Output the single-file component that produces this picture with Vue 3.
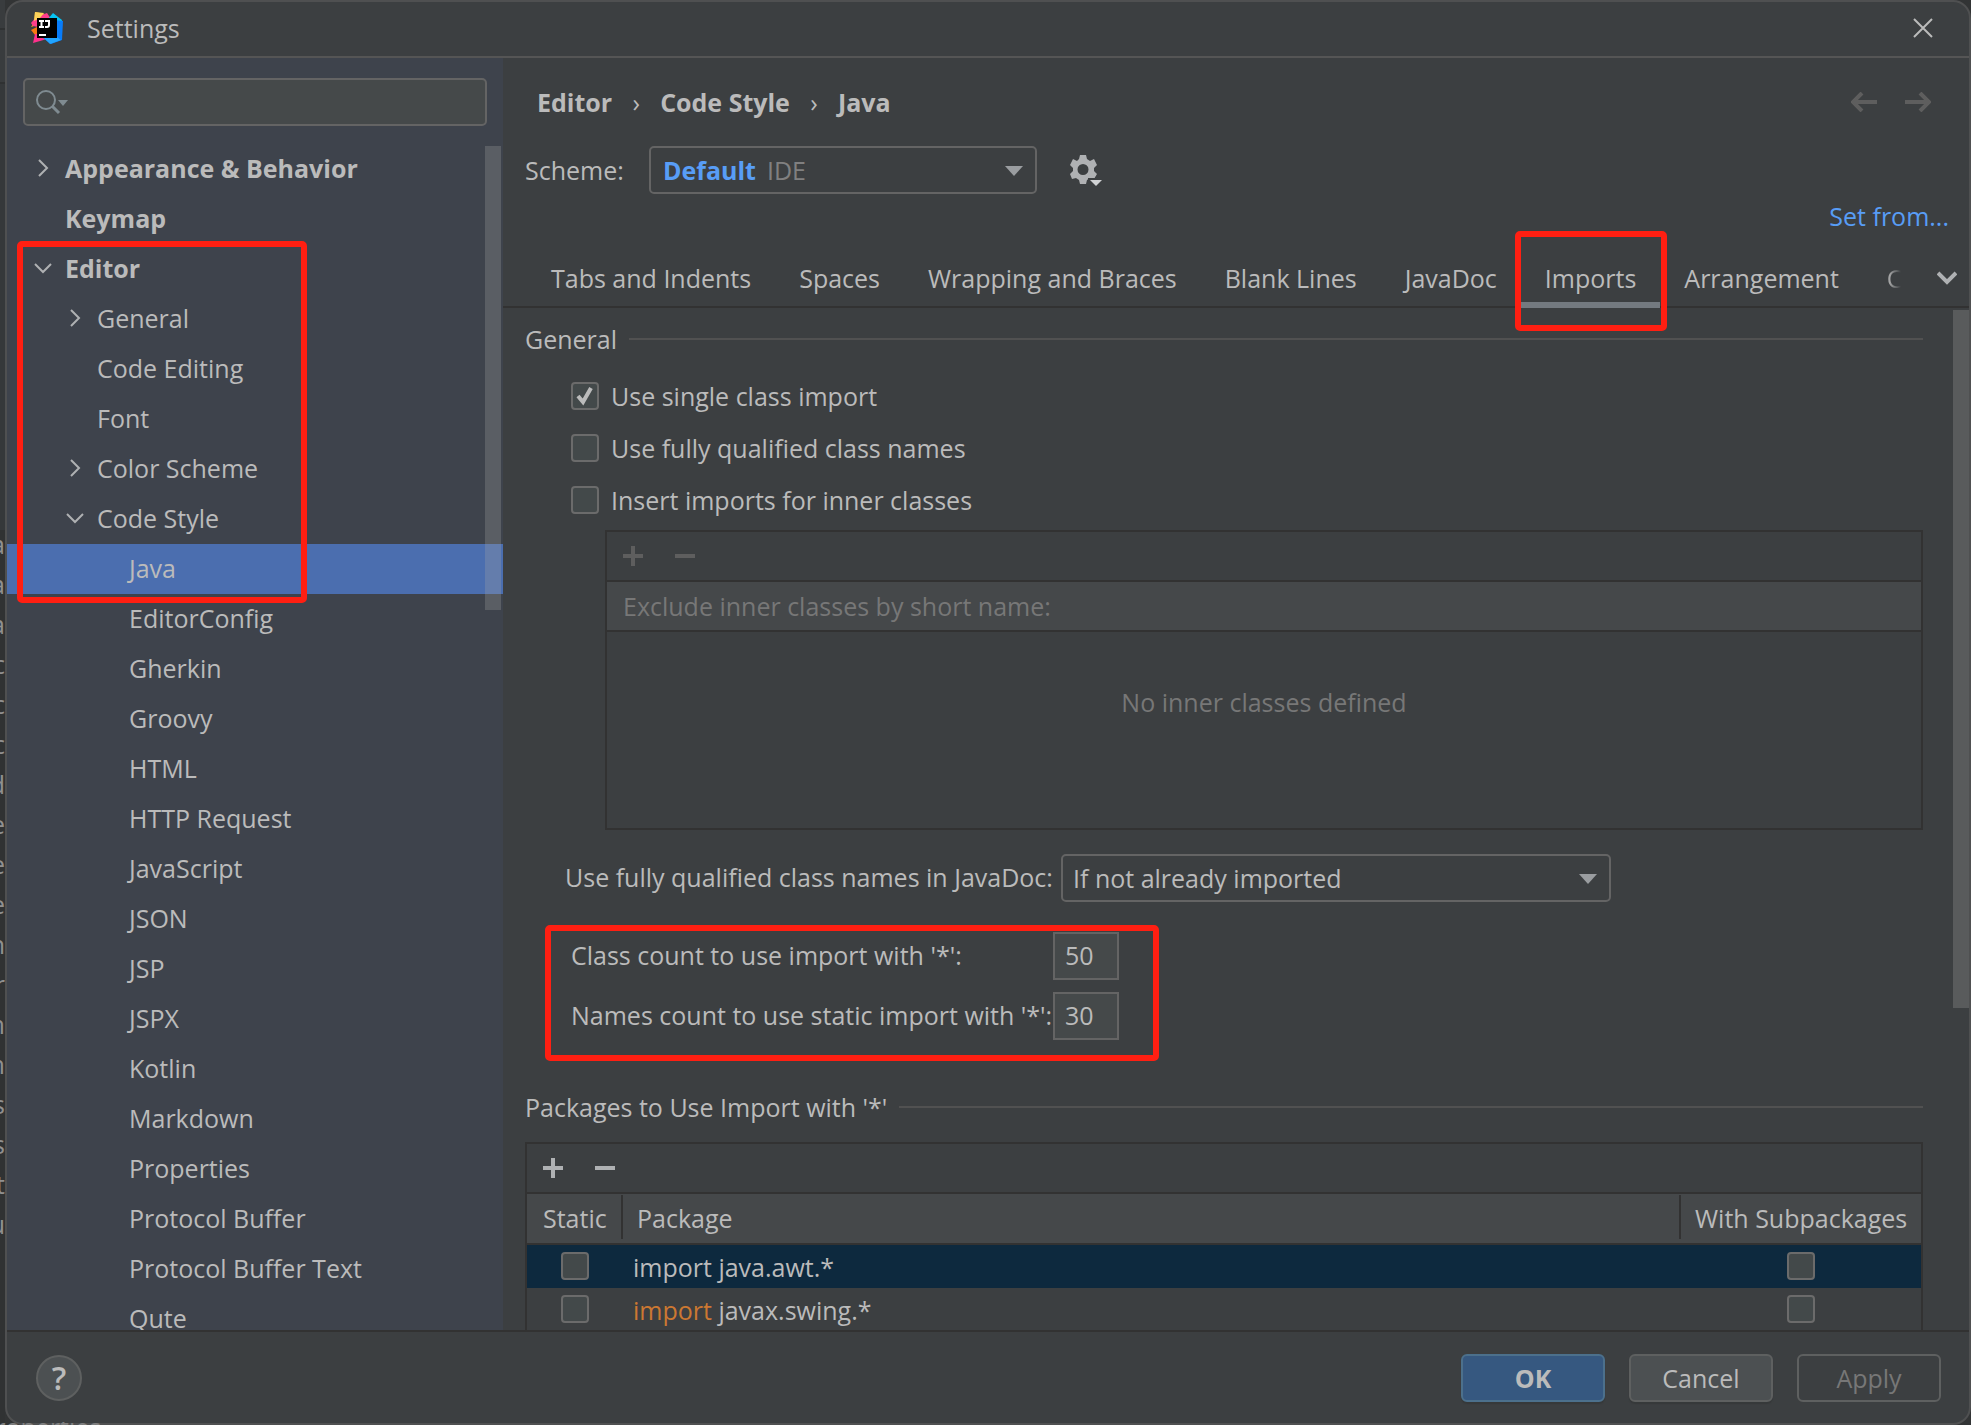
<script setup>
import { ref } from 'vue'

const query = ref('')
const topNodes = [
  { label: 'Appearance & Behavior', level: 0, state: 'closed' },
  { label: 'Keymap', level: 0 },
]
const editorNodes = [
  { label: 'Editor', level: 0, state: 'open' },
  { label: 'General', level: 1, state: 'closed' },
  { label: 'Code Editing', level: 1 },
  { label: 'Font', level: 1 },
  { label: 'Color Scheme', level: 1, state: 'closed' },
  { label: 'Code Style', level: 1, state: 'open' },
  { label: 'Java', level: 2, selected: true },
]
const languageNodes = [
  'EditorConfig', 'Gherkin', 'Groovy', 'HTML', 'HTTP Request', 'JavaScript', 'JSON', 'JSP', 'JSPX',
  'Kotlin', 'Markdown', 'Properties', 'Protocol Buffer', 'Protocol Buffer Text', 'Qute',
].map((label) => ({ label, level: 2 }))
const groups = [
  { nodes: topNodes },
  { nodes: editorNodes, marked: true },
  { nodes: languageNodes },
]

const tabs = ['Tabs and Indents', 'Spaces', 'Wrapping and Braces', 'Blank Lines', 'JavaDoc', 'Imports', 'Arrangement']
const activeTab = ref('Imports')

const options = ref([
  { label: 'Use single class import', checked: true },
  { label: 'Use fully qualified class names', checked: false },
  { label: 'Insert imports for inner classes', checked: false },
])
const classCount = ref('50')
const namesCount = ref('30')
const packages = ref([
  { name: 'java.awt.*', isStatic: false, sub: false, selected: true },
  { name: 'javax.swing.*', isStatic: false, sub: false, selected: false },
])
const behind = ['a', 'a', 'a', 'c', 'c', 'c', 'd', 'e', 'e', 'e', 'n', 'r', 'm', 'm', 's', 's', 't', 'u']
</script>

<template>
  <div class="desktop">
    <div class="behind" aria-hidden="true">
      <span v-for="(letter, i) in behind" :key="i">{{ letter }}</span>
    </div>
    <div class="dialog">
      <header class="titlebar">
        <svg class="logo" width="32" height="32" viewBox="0 0 32 32">
          <path fill="#fdb60d" d="M4 0 14 2 9 12 0 15 3 11Z" />
          <path fill="#ff3d8b" d="M0 11 5 5 16 1 20 7 12 16 2 14Z" />
          <path fill="#fcd25a" d="M4 0 13 1 9 6 3 9Z" />
          <path fill="#f97a12" d="M0 18 8 14 10 26 4 23Z" />
          <path fill="#ff318c" d="M4 22 12 22 16 27 2 31Z" />
          <path fill="#07c3f2" d="M17 7 22 1 31 8 30 14 20 14Z" />
          <path fill="#087cfa" d="M24 8 32 9 31 28 20 32 12 26Z" />
          <path fill="#21a5ff" d="M12 25 26 25 30 28 19 32Z" />
          <path fill="#000" d="M6 6h20v20H6z" />
          <path fill="none" stroke="#fff" stroke-width="2" d="M8 9h5M8 15h5M10.500 9v6M14 9h4v4q0 2-2 2h-2M8 23h7" />
        </svg>
        <h1>Settings</h1>
        <button class="icon-button close" aria-label="Close">
          <svg width="20" height="20" viewBox="0 0 20 20"><path d="M1 1 19 19M19 1 1 19" stroke="#bbb" stroke-width="2" /></svg>
        </button>
      </header>

      <div class="body">
        <aside class="sidebar">
          <div class="search">
            <svg width="34" height="26" viewBox="0 0 34 26">
              <circle cx="11" cy="11" r="9" fill="none" stroke="#7f8b91" stroke-width="2" />
              <path d="M17 17l7 7" stroke="#7f8b91" stroke-width="3" />
              <path d="M23 11h10l-5 6z" fill="#7f8b91" />
            </svg>
            <input v-model="query" type="text" aria-label="Search settings" />
          </div>
          <nav class="tree" aria-label="Settings">
            <ul v-for="(group, g) in groups" :key="g" :class="{ group: group.marked }">
              <li v-for="node in group.nodes" :key="node.label">
                <a href="#" :class="['node', 'level-' + node.level, { selected: node.selected }]">
                  <span class="toggle">
                    <svg v-if="node.state === 'closed'" width="12" height="18" viewBox="0 0 12 18"><path d="M2 1l8 8-8 8" fill="none" stroke="#afb1b3" stroke-width="2" /></svg>
                    <svg v-if="node.state === 'open'" width="18" height="12" viewBox="0 0 18 12"><path d="M1 2l8 8 8-8" fill="none" stroke="#afb1b3" stroke-width="2" /></svg>
                  </span>
                  {{ node.label }}
                </a>
              </li>
              <li v-if="group.marked" class="mark tree-mark" aria-hidden="true"></li>
            </ul>
            <div class="thumb tree-thumb"></div>
          </nav>
        </aside>

        <main class="main">
          <div class="crumb-row">
            <nav class="crumbs" aria-label="Breadcrumb">
              <a href="#">Editor</a>
              <span>›</span>
              <a href="#">Code Style</a>
              <span>›</span>
              <a href="#">Java</a>
            </nav>
            <button class="icon-button" aria-label="Back">
              <svg width="26" height="20" viewBox="0 0 26 20"><path d="M26 10H3M11 1l-9 9 9 9" fill="none" stroke="#5e5e5e" stroke-width="4" /></svg>
            </button>
            <button class="icon-button" aria-label="Forward">
              <svg width="26" height="20" viewBox="0 0 26 20"><path d="M0 10h23M15 1l9 9-9 9" fill="none" stroke="#5e5e5e" stroke-width="4" /></svg>
            </button>
          </div>

          <div class="scheme-row">
            <label for="scheme">Scheme:</label>
            <div class="combo scheme-combo">
              <select id="scheme"><option>Default</option></select>
              <span class="scope">IDE</span>
              <svg class="arrow" width="18" height="10" viewBox="0 0 18 10"><path d="M0 0h18L9 10z" fill="#9a9da0" /></svg>
            </div>
            <button class="icon-button gear" aria-label="Scheme actions">
              <svg width="32" height="32" viewBox="0 0 32 32">
                <path fill="#afb1b3" fill-rule="evenodd" d="M10 1h6l1 4 3 2 4-2 3 6-3 3v3l3 3-3 5-4-1-3 2-1 4h-6l-1-4-3-2-4 1-2-5 3-3v-3L0 11l3-6 4 2 2-2zM13 10a5 5 0 1 0 0 11 5 5 0 1 0 0-11z" />
                <path d="M18 24h14v8H18z" fill="#3c3f41" />
                <path d="M20 26h12l-6 6z" fill="#d0d2d4" />
              </svg>
            </button>
          </div>
          <a class="set-from" href="#">Set from...</a>

          <div class="tabbar" role="tablist">
            <button
              v-for="tab in tabs"
              :key="tab"
              role="tab"
              :class="['tab', { active: tab === activeTab }]"
              :aria-selected="tab === activeTab"
              @click="activeTab = tab"
            >
              {{ tab }}
              <span v-if="tab === 'Imports'" class="mark tab-mark"></span>
            </button>
            <button class="tab cut" role="tab">C</button>
            <button class="icon-button more" aria-label="More tabs">
              <svg width="20" height="14" viewBox="0 0 20 14"><path d="M1 2l9 9 9-9" fill="none" stroke="#afb1b3" stroke-width="4" /></svg>
            </button>
          </div>

          <div class="scroll">
            <section class="content">
              <h2>General</h2>
              <div class="options">
                <label v-for="o in options" :key="o.label" class="check">
                  <span class="box">
                    <input v-model="o.checked" type="checkbox" />
                    <svg v-if="o.checked" width="18" height="20" viewBox="0 0 18 20"><path d="M2 10l5 6L15 2" fill="none" stroke="#bbb" stroke-width="4" /></svg>
                  </span>
                  {{ o.label }}
                </label>
              </div>

              <div class="panel inner-classes">
                <div class="tools disabled">
                  <button class="icon-button" aria-label="Add class" disabled><svg width="20" height="20" viewBox="0 0 20 20"><path d="M0 10h20M10 0v20" stroke="currentColor" stroke-width="4" /></svg></button>
                  <button class="icon-button" aria-label="Remove class" disabled><svg width="20" height="20" viewBox="0 0 20 20"><path d="M0 10h20" stroke="currentColor" stroke-width="4" /></svg></button>
                </div>
                <div class="panel-head">Exclude inner classes by short name:</div>
                <div class="empty">No inner classes defined</div>
              </div>

              <div class="javadoc">
                <label for="javadoc">Use fully qualified class names in JavaDoc:</label>
                <div class="combo javadoc-combo">
                  <select id="javadoc"><option>If not already imported</option></select>
                  <svg class="arrow" width="18" height="10" viewBox="0 0 18 10"><path d="M0 0h18L9 10z" fill="#9a9da0" /></svg>
                </div>
              </div>

              <div class="counts">
                <label for="class-count">Class count to use import with '*':</label>
                <input id="class-count" v-model="classCount" type="text" />
                <label for="names-count">Names count to use static import with '*':</label>
                <input id="names-count" v-model="namesCount" type="text" />
                <span class="mark counts-mark"></span>
              </div>

              <h2>Packages to Use Import with '*'</h2>
              <div class="panel packages">
                <div class="tools">
                  <button class="icon-button" aria-label="Add package"><svg width="20" height="20" viewBox="0 0 20 20"><path d="M0 10h20M10 0v20" stroke="currentColor" stroke-width="4" /></svg></button>
                  <button class="icon-button" aria-label="Remove package"><svg width="20" height="20" viewBox="0 0 20 20"><path d="M0 10h20" stroke="currentColor" stroke-width="4" /></svg></button>
                </div>
                <table>
                  <thead>
                    <tr>
                      <th class="col-static"><div>Static</div></th>
                      <th><div>Package</div></th>
                      <th class="col-sub"><div>With Subpackages</div></th>
                    </tr>
                  </thead>
                  <tbody>
                    <tr v-for="p in packages" :key="p.name" :class="{ selected: p.selected }">
                      <td class="tick"><span class="box"><input v-model="p.isStatic" type="checkbox" :aria-label="'Static ' + p.name" /></span></td>
                      <td class="name"><span class="keyword">import</span> {{ p.name }}</td>
                      <td class="tick"><span class="box"><input v-model="p.sub" type="checkbox" :aria-label="'With subpackages ' + p.name" /></span></td>
                    </tr>
                  </tbody>
                </table>
              </div>
            </section>
            <div class="thumb content-thumb"></div>
          </div>
        </main>
      </div>

      <footer class="footer">
        <button class="help" aria-label="Help">?</button>
        <button class="action primary">OK</button>
        <button class="action">Cancel</button>
        <button class="action" disabled>Apply</button>
      </footer>
    </div>
    <div class="behind-bottom" aria-hidden="true"><span>properties</span></div>
  </div>
</template>

<style>
body {
  margin: 0;
  background: #323435;
}
</style>

<style scoped>
* {
  box-sizing: border-box;
}
.desktop {
  position: relative;
  display: grid;
  grid-template-columns: 5px minmax(0, 1fr);
  height: 100vh;
  overflow: hidden;
  background: #323435;
  color: #bbb;
  font-family: "Open Sans", "Noto Sans", sans-serif;
  font-size: 25px;
  line-height: 34px;
}
.behind {
  display: flex;
  flex-direction: column;
  align-items: flex-end;
  padding-top: 524px;
  overflow: hidden;
  color: #909090;
  line-height: 40px;
  background: linear-gradient(#393c3e 28px, #2f3132 28px 30px, #393c3e 30px 82px, #2f3132 82px 84px, #35383a 84px 530px, #303233 530px);
}
.behind-bottom {
  position: absolute;
  bottom: 0;
  left: 0;
  height: 3px;
  overflow: hidden;
  color: #808080;
}
.behind-bottom span {
  display: block;
  margin: -12px 0 0 -20px;
}
.dialog {
  display: flex;
  flex-direction: column;
  min-width: 0;
  height: 100vh;
  border: 2px solid #4f5051;
  border-radius: 18px;
  background: #3c3f41;
  overflow: hidden;
}
button,
input,
select {
  margin: 0;
  padding: 0;
  border: 0;
  background: none;
  color: inherit;
  font: inherit;
  outline: 0;
}
a {
  color: inherit;
  text-decoration: none;
}
h1,
h2 {
  margin: 0;
  font-size: inherit;
  font-weight: 400;
}
svg {
  display: block;
}
.icon-button {
  display: grid;
  place-items: center;
}
.mark {
  position: absolute;
  border: 6px solid #ff1f12;
  border-radius: 5px;
  pointer-events: none;
}

.titlebar {
  display: flex;
  align-items: center;
  flex: none;
  height: 56px;
  padding: 0 36px 2px 24px;
  border-bottom: 2px solid #555;
}
.titlebar h1 {
  flex: 1;
  padding-left: 24px;
}
.body {
  display: flex;
  flex: 1;
  min-height: 0;
}

.sidebar {
  display: flex;
  flex-direction: column;
  flex: none;
  width: 496px;
  padding-top: 20px;
  background: #3e434c;
}
.search {
  display: flex;
  align-items: center;
  flex: none;
  height: 48px;
  margin: 0 16px 18px;
  padding: 0 10px;
  border: 2px solid #646464;
  border-radius: 5px;
  background: #45494a;
}
.search input {
  flex: 1;
  min-width: 0;
  padding-left: 8px;
}
.tree {
  position: relative;
  flex: 1;
  min-height: 0;
  overflow: hidden;
}
.tree ul {
  margin: 0;
  padding: 0;
  list-style: none;
}
.tree .group {
  position: relative;
}
.tree-mark {
  inset: -3px auto -9px 10px;
  width: 290px;
}
.node {
  display: flex;
  align-items: center;
  height: 50px;
  padding-bottom: 2px;
  white-space: nowrap;
}
.toggle {
  display: grid;
  place-items: center;
  flex: none;
  width: 44px;
}
.level-0 {
  padding-left: 14px;
  font-weight: 700;
}
.level-1 {
  padding-left: 46px;
}
.level-2 {
  padding-left: 78px;
}
.node.selected {
  background: #4b6eaf;
}
.thumb {
  position: absolute;
  width: 16px;
  background: rgba(166, 166, 166, 0.28);
}
.tree-thumb {
  top: 2px;
  right: 2px;
  height: 464px;
}

.main {
  display: flex;
  flex-direction: column;
  flex: 1;
  min-width: 0;
}
.crumb-row {
  display: flex;
  align-items: center;
  gap: 28px;
  flex: none;
  height: 88px;
  padding: 0 38px 0 34px;
}
.crumbs {
  display: flex;
  flex: 1;
  font-weight: 700;
}
.crumbs span {
  width: 48px;
  text-align: center;
  font-weight: 400;
}
.scheme-row {
  display: flex;
  align-items: center;
  flex: none;
  height: 48px;
  padding-left: 22px;
}
.scheme-row label {
  width: 124px;
}
.combo {
  position: relative;
  flex: none;
  height: 48px;
}
.combo select {
  width: 100%;
  height: 100%;
  padding: 0 12px;
  border: 2px solid #646464;
  border-radius: 5px;
  appearance: none;
}
.combo .arrow {
  position: absolute;
  top: 20px;
  right: 14px;
  pointer-events: none;
}
.scheme-combo {
  width: 388px;
}
.scheme-combo select {
  color: #589df6;
  font-weight: 700;
}
.scope {
  position: absolute;
  top: 7px;
  left: 118px;
  color: #808080;
  pointer-events: none;
}
.gear {
  margin-left: 33px;
}
.set-from {
  align-self: flex-end;
  padding: 5px 20px 1px 0;
  color: #589df6;
}
.tabbar {
  display: flex;
  flex: none;
  height: 58px;
  margin-top: 16px;
  padding-left: 24px;
  border-bottom: 2px solid #323232;
}
.tab {
  position: relative;
  flex: none;
  height: 58px;
  padding: 0 24px 2px;
  white-space: nowrap;
}
.tab.active {
  box-shadow: inset 0 -6px #747a80;
}
.tab-mark {
  inset: -19px -7px -23px -6px;
}
.tab.cut {
  width: 38px;
  padding-right: 0;
  overflow: hidden;
  color: transparent;
  background: linear-gradient(90deg, #bbb 24px, #3c3f41 38px);
  background-clip: text;
}
.more {
  margin-left: auto;
  padding-right: 12px;
}

.scroll {
  position: relative;
  flex: 1;
  min-height: 0;
  overflow: hidden;
}
.content-thumb {
  top: 2px;
  right: 0;
  height: 698px;
}
.content {
  padding: 14px 46px 0 22px;
}
.content h2 {
  display: flex;
  align-items: center;
  gap: 12px;
}
.content h2::after {
  content: "";
  flex: 1;
  height: 2px;
  background: #515151;
}
.options {
  padding: 14px 0 0 46px;
}
.check {
  display: flex;
  align-items: center;
  gap: 12px;
  width: max-content;
  height: 52px;
}
.box {
  position: relative;
  display: inline-block;
  width: 28px;
  height: 28px;
  vertical-align: top;
}
.box input {
  display: block;
  width: 28px;
  height: 28px;
  border: 2px solid #6b6b6b;
  border-radius: 4px;
  background: #43494a;
  appearance: none;
}
.box svg {
  position: absolute;
  top: 4px;
  left: 5px;
  pointer-events: none;
}
.panel {
  border: 2px solid #323232;
}
.inner-classes {
  height: 300px;
  margin: 4px 0 24px 80px;
}
.tools {
  display: flex;
  align-items: center;
  gap: 32px;
  height: 50px;
  padding-left: 16px;
  border-bottom: 2px solid #323232;
  color: #afb1b3;
}
.tools.disabled {
  color: #5e5e5e;
}
.panel-head {
  height: 50px;
  padding: 7px 16px;
  border-bottom: 2px solid #323232;
  background: #45484a;
  color: #777;
}
.empty {
  padding-top: 53px;
  text-align: center;
  color: #777;
}
.javadoc {
  display: flex;
  align-items: center;
  height: 48px;
  padding-left: 40px;
  white-space: nowrap;
}
.javadoc label {
  width: 496px;
  padding-bottom: 2px;
}
.javadoc-combo {
  width: 550px;
}
.javadoc-combo select {
  padding: 0 10px;
}
.counts {
  position: relative;
  display: grid;
  grid-template-columns: 482px 66px;
  align-items: center;
  row-gap: 12px;
  width: max-content;
  margin: 30px 0 50px 46px;
  white-space: nowrap;
}
.counts label {
  padding-bottom: 2px;
}
.counts input {
  width: 66px;
  height: 48px;
  padding: 0 0 2px 10px;
  border: 2px solid #646464;
  background: #45494a;
}
.counts-mark {
  inset: -7px -40px -21px -26px;
}
.packages {
  margin-top: 18px;
}
table {
  width: 100%;
  border-collapse: collapse;
  table-layout: fixed;
}
th {
  height: 50px;
  padding: 0 0 4px;
  border-bottom: 2px solid #323232;
  background: #45484a;
  font-weight: 400;
  text-align: left;
}
th div {
  height: 44px;
  padding: 6px 14px;
  border-left: 2px solid #323232;
}
.col-static {
  width: 94px;
}
.col-static div {
  padding-left: 16px;
  border-left: 0;
}
.col-sub {
  width: 242px;
}
.col-sub div {
  white-space: nowrap;
}
td {
  height: 44px;
  padding: 0;
}
.tick {
  padding: 4px 0 0 2px;
  text-align: center;
}
.name {
  padding-left: 12px;
}
.keyword {
  color: #cc7832;
}
tr.selected {
  background: #0d293e;
}
tr.selected .keyword {
  color: inherit;
}

.footer {
  display: flex;
  align-items: center;
  gap: 24px;
  flex: none;
  height: 93px;
  padding: 0 28px 0 29px;
  border-top: 2px solid #323232;
}
.help {
  width: 46px;
  height: 46px;
  margin-right: auto;
  border: 2px solid #5e6060;
  border-radius: 50%;
  background: #4c5052;
  font-size: 32px;
  font-weight: 600;
  line-height: 40px;
}
.action {
  width: 144px;
  height: 48px;
  border: 2px solid #5e6060;
  border-radius: 6px;
  background: #4c5052;
  box-shadow: 0 2px 1px #36393a;
}
.action.primary {
  border-color: #4c708c;
  background: #365880;
  font-weight: 700;
}
.action:disabled {
  background: none;
  box-shadow: none;
  color: #777;
}
</style>
